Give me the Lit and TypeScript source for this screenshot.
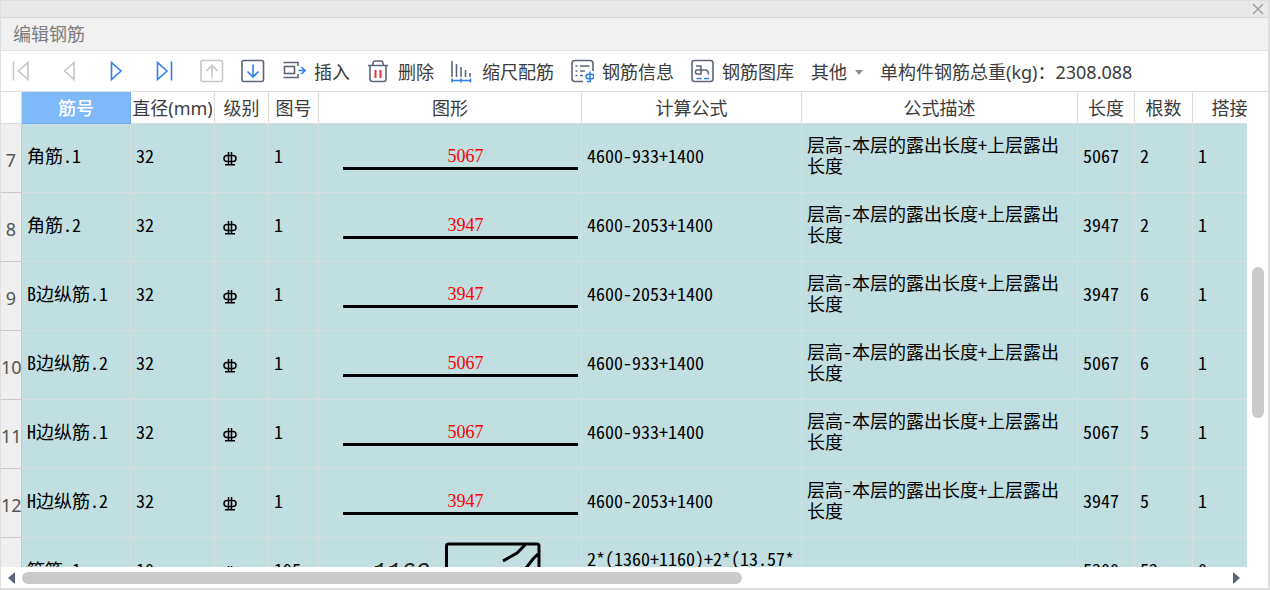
import { LitElement, html, svg, css, nothing } from "lit";
import { customElement, state } from "lit/decorators.js";

interface Bar {
  no: string;
  name: string;
  dia: string;
  fig: string;
  len: string;
  formula: string;
  desc: string;
  count: string;
  lap: string;
  stirrup?: boolean;
}

const DESC = "层高-本层的露出长度+上层露出长度";

const straight = (no: string, name: string, len: string, formula: string, count: string): Bar => ({
  no, name, dia: "32", fig: "1", len, formula, desc: DESC, count, lap: "1",
});

const BARS: Bar[] = [
  straight("7", "角筋.1", "5067", "4600-933+1400", "2"),
  straight("8", "角筋.2", "3947", "4600-2053+1400", "2"),
  straight("9", "B边纵筋.1", "3947", "4600-2053+1400", "6"),
  straight("10", "B边纵筋.2", "5067", "4600-933+1400", "6"),
  straight("11", "H边纵筋.1", "5067", "4600-933+1400", "5"),
  straight("12", "H边纵筋.2", "3947", "4600-2053+1400", "5"),
  {
    no: "13", name: "箍筋.1", dia: "10", fig: "195", len: "5300",
    formula: "2*(1360+1160)+2*(13.57*d)", desc: "", count: "52", lap: "0", stirrup: true,
  },
];

const COLUMNS = ["筋号", "直径(mm)", "级别", "图号", "图形", "计算公式", "公式描述", "长度", "根数", "搭接"];

const icon = (body: unknown) => html`<svg class="icon" viewBox="0 0 24 24" aria-hidden="true">${body}</svg>`;

const ICONS = {
  first: icon(svg`<path class="off" d="M5.5 2.500v19M20 3.500v17L10.500 12z"/>`),
  prev: icon(svg`<path class="off" d="M18 3.500v17L8.500 12z"/>`),
  next: icon(svg`<path class="blue" d="M7.500 3.500v17L17 12z"/>`),
  last: icon(svg`<path class="blue" d="M5.500 3.500v17L15 12zM19.500 2.500v19"/>`),
  up: icon(svg`<rect class="off" x="1" y="1.500" width="21.500" height="21" rx="2"/><path class="off" d="M12 18.500V6.500M6.500 12L12 6.500l5.500 5.500"/>`),
  down: icon(svg`<rect class="dark" x="1" y="1.500" width="21.500" height="21" rx="2"/><path class="blue" d="M12 5.500v12M6.500 12.500L12 18l5.500-5.500"/>`),
  insert: icon(svg`<path class="dark" d="M1.500 3.500h14.500v3.500M1.500 18.500h14.500v-3.500"/><rect class="dark" x="2.500" y="7.500" width="10" height="7"/><path class="blue" d="M16.500 11.500h6M19.500 8l3.500 3.500-3.500 3.500"/>`),
  remove: icon(svg`<path class="dark" d="M2 6.500h20M6.500 6l1-3q.5-1 1.500-1h6q1 0 1.500 1l1 3M4 7v13q0 2.500 2.500 2.500h11q2.500 0 2.500-2.500V7"/><path class="red" d="M9.500 11v8M14.500 11v8"/>`),
  scale: icon(svg`<path class="dark" d="M2 2v16M6.500 5V18M11 8v10M15.500 11V18M20 14v4"/><path class="blue" d="M2 19.500v4M11 19.500v4M20.500 19.500v4M2 21.500h18.500"/>`),
  info: icon(svg`<path class="dark" d="M13 22.500H5q-3 0-3-3v-15q0-3 3-3h15q3 0 3 3V12M5.500 7h2M10 7h9.500M5.500 12h2M10 12h5M5.500 16.500h2M10 16.500h3"/><path class="blue" d="M20 12.500v5M20 17.500v5.500M20 15q4 0 4 2.500t-4 2.500q-4 0-4-2.500t4-2.500M17 22.500h4"/>`),
  library: icon(svg`<rect class="dark" x="2" y="1.500" width="21" height="21" rx="2.500"/><path class="dark" d="M6 7h5v8H7q-1.500 0-1.500-2t1.500-2h8q3.500 0 3.500 4.500"/><path class="blue" d="M6.500 19.500h5M14 19.500h5"/>`),
};

@customElement("app-root")
export class AppRoot extends LitElement {
  @state() private selected = 0;

  static styles = css`
    :host {
      display: flex;
      flex-direction: column;
      box-sizing: border-box;
      height: 100vh;
      border: 1px solid #dedede;
      border-width: 1px 2px 2px 1px;
      background: #fff;
      color: #3c3c3c;
      font: 18px/24px "Noto Sans", "Noto Sans CJK SC", sans-serif;
      overflow: hidden;
    }
    button {
      display: inline-flex;
      align-items: center;
      padding: 0;
      border: 0;
      background: none;
      color: inherit;
      font: inherit;
      white-space: nowrap;
    }
    .caption {
      display: flex;
      justify-content: flex-end;
      align-items: center;
      height: 16px;
      padding-right: 4px;
      border-bottom: 1px solid #dadada;
      background: #e8e8e8;
    }
    .close-icon {
      width: 12px;
      height: 12px;
      stroke: #a0a0a0;
      stroke-width: 1.5;
    }
    .heading {
      margin: 0;
      padding: 4px 12px;
      border-bottom: 1px solid #e2e2e2;
      background: #f1f1f1;
      color: #7d7d7d;
      font-size: 18px;
      font-weight: 400;
    }
    .toolbar {
      display: flex;
      align-items: center;
      gap: 24px;
      height: 40px;
      padding-left: 7px;
      border-bottom: 1px solid #dedede;
      white-space: nowrap;
    }
    .group {
      display: flex;
      align-items: center;
      gap: 24px;
    }
    .actions {
      gap: 17px;
    }
    .labelled {
      gap: 8px;
      margin-right: -1px;
    }
    .label {
      padding-top: 2px;
    }
    .more {
      gap: 8px;
      margin-left: 1px;
    }
    .caret {
      border: 4px solid transparent;
      border-top: 5px solid #8c8c8c;
      border-bottom: 0;
    }
    .icon {
      flex: none;
      width: 24px;
      height: 24px;
      fill: none;
      stroke-width: 1.6;
    }
    .off { stroke: #c6c6c6; }
    .blue { stroke: #2f80ed; }
    .dark { stroke: #5d6678; }
    .red { stroke: #e5343d; stroke-width: 2; }
    .grid {
      display: grid;
      flex: 1;
      min-height: 0;
      grid-template: minmax(0, 1fr) 21px / minmax(0, 1fr) 21px;
    }
    .viewport {
      overflow: hidden;
    }
    table {
      width: calc(100% + 20px);
      table-layout: fixed;
      border-collapse: separate;
      border-spacing: 0;
    }
    .c-no { width: 21px; }
    .c-name { width: 109px; }
    .c-dia { width: 84px; }
    .c-grade { width: 54px; }
    .c-fig { width: 50px; }
    .c-shape { width: 263px; }
    .c-formula { width: 220px; }
    .c-len { width: 57px; }
    .c-count { width: 58px; }
    .c-lap { width: 74px; }
    th, td {
      box-sizing: border-box;
      border-right: 1px solid #dcdcdc;
      border-bottom: 1px solid #dcdcdc;
    }
    thead th {
      height: 32px;
      padding: 0;
      font-weight: 400;
      white-space: nowrap;
    }
    thead button {
      justify-content: center;
      width: 100%;
      height: 31px;
      padding-top: 1px;
    }
    thead .active {
      border-color: #6eabf5;
      background: #80b9fa;
      color: #fff;
      font-weight: 500;
    }
    tbody th {
      height: 69px;
      padding: 3px 0 0;
      border-color: #c8c8c8;
      background: #efefef;
      color: #555;
      font-weight: 400;
    }
    td {
      height: 69px;
      padding: 0 4px 6px 5px;
      background: #c1dfe1;
      color: #000;
      font: 18px/21px "Noto Sans CJK SC", sans-serif;
      font-feature-settings: "hwid";
      word-break: break-all;
    }
    .shape {
      padding: 0;
      vertical-align: top;
    }
    .straight {
      margin: 22px 3px 0 24px;
      padding-left: 10px;
      border-bottom: 3px solid #000;
      color: #f00;
      font-family: "Liberation Serif", serif;
      text-align: center;
    }
    .stirrup {
      display: block;
      width: 100%;
      height: 68px;
      fill: none;
      stroke: #000;
      stroke-width: 3;
    }
    .dim {
      fill: #222;
      stroke: none;
      font: italic 24px "Liberation Mono", monospace;
    }
    .grade {
      display: block;
      width: 14px;
      height: 14px;
      margin: 7px 0 0 3px;
      fill: none;
      stroke: #000;
      stroke-width: 1.5;
    }
    .hbar {
      display: flex;
      align-items: center;
      padding: 0 7px;
    }
    .track-x {
      display: grid;
      flex: 1;
      margin: 0 6px 0 7px;
    }
    .track-y {
      display: grid;
      padding: 0 4px 0 5px;
    }
    .thumb-x {
      grid-column: 2;
      height: 12px;
      border-radius: 6px;
      background: #cacaca;
    }
    .thumb-y {
      grid-row: 2;
      border-radius: 6px;
      background: #cacaca;
    }
    .arrow {
      border: 6px solid transparent;
    }
    .left {
      border-left: 0;
      border-right: 7px solid #5d6678;
    }
    .right {
      border-right: 0;
      border-left: 7px solid #5d6678;
    }
  `;

  private action(glyph: unknown, label: string) {
    return html`<button class="labelled">${glyph}<span class="label">${label}</span></button>`;
  }

  private tool(glyph: unknown, label: string, disabled = false) {
    return html`<button aria-label=${label} ?disabled=${disabled}>${glyph}</button>`;
  }

  private shape(bar: Bar) {
    return bar.stirrup
      ? html`<svg class="stirrup" viewBox="0 0 262 68">
          <text class="dim" x="53" y="41">1160</text>
          <path d="M127.500 68V8q0-2 2-2h88.500q2 0 2 2v60M206 7l-8 8-14 8M219 16l-5 5-7 9"/>
        </svg>`
      : html`<div class="straight">${bar.len}</div>`;
  }

  private row(bar: Bar) {
    return html`<tr>
      <th scope="row">${bar.no}</th>
      <td>${bar.name}</td>
      <td>${bar.dia}</td>
      <td>
        <svg class="grade" viewBox="0 0 14 14" role="img" aria-label="HRB400">
          <path d="M5.500 0v12.500M8.500 0v12.500M2 12.800h10M4 3.500h6q3 0 3 3t-3 3H4q-3 0-3-3t3-3z"/>
        </svg>
      </td>
      <td>${bar.fig}</td>
      <td class="shape">${this.shape(bar)}</td>
      <td>${bar.formula}</td>
      <td>${bar.desc || nothing}</td>
      <td>${bar.len}</td>
      <td>${bar.count}</td>
      <td>${bar.lap}</td>
    </tr>`;
  }

  render() {
    return html`
      <header class="caption">
        <button aria-label="关闭">
          <svg class="close-icon" viewBox="0 0 12 12"><path d="M1 1l10 10M11 1L1 11"/></svg>
        </button>
      </header>
      <h1 class="heading">编辑钢筋</h1>
      <div class="toolbar" role="toolbar">
        <div class="group">
          ${this.tool(ICONS.first, "首行", true)} ${this.tool(ICONS.prev, "上一行", true)}
          ${this.tool(ICONS.next, "下一行")} ${this.tool(ICONS.last, "末行")}
        </div>
        <div class="group actions">
          ${this.tool(ICONS.up, "上移", true)} ${this.tool(ICONS.down, "下移")}
          ${this.action(ICONS.insert, "插入")} ${this.action(ICONS.remove, "删除")}
          ${this.action(ICONS.scale, "缩尺配筋")} ${this.action(ICONS.info, "钢筋信息")}
          ${this.action(ICONS.library, "钢筋图库")}
          <button class="more label" aria-haspopup="menu">其他<span class="caret"></span></button>
          <span class="label">单构件钢筋总重(kg)：2308.088</span>
        </div>
      </div>
      <div class="grid">
        <div class="viewport">
          <table>
            <colgroup>
              <col class="c-no" /><col class="c-name" /><col class="c-dia" /><col class="c-grade" />
              <col class="c-fig" /><col class="c-shape" /><col class="c-formula" /><col />
              <col class="c-len" /><col class="c-count" /><col class="c-lap" />
            </colgroup>
            <thead>
              <tr>
                <th></th>
                ${COLUMNS.map((label, i) => html`<th scope="col" class=${i === this.selected ? "active" : ""}>
                  <button @click=${() => (this.selected = i)}>${label}</button>
                </th>`)}
              </tr>
            </thead>
            <tbody>${BARS.map((bar) => this.row(bar))}</tbody>
          </table>
        </div>
        <div class="track-y" style="grid-template-rows: 175fr 151fr 149fr"><div class="thumb-y"></div></div>
        <div class="hbar">
          <button class="arrow left" aria-label="向左滚动"></button>
          <div class="track-x" style="grid-template-columns: 0fr 721fr 485fr"><div class="thumb-x"></div></div>
          <button class="arrow right" aria-label="向右滚动"></button>
        </div>
      </div>
    `;
  }
}
